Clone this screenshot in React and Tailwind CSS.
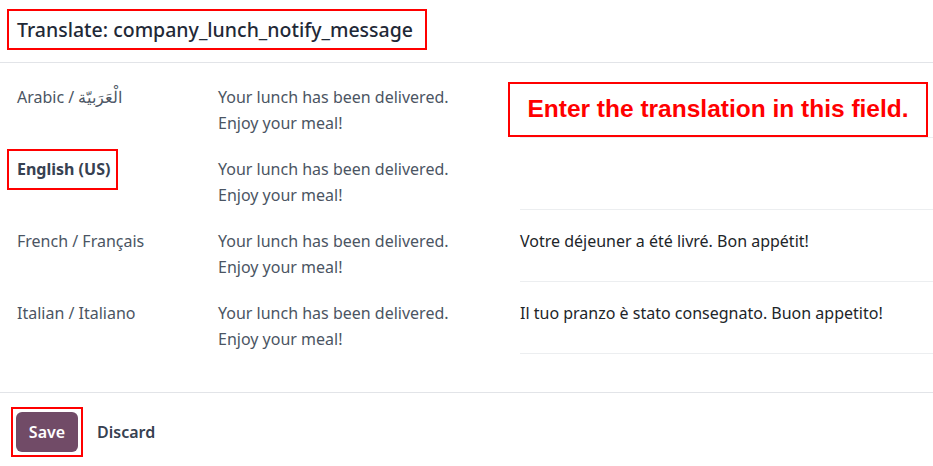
import React from "react";

const rows = [
    { lang: "Arabic / الْعَرَبيّة", value: "", hint: true },
    { lang: "English (US)", value: "", bold: true },
    { lang: "French / Français", value: "Votre déjeuner a été livré. Bon appétit!" },
    { lang: "Italian / Italiano", value: "Il tuo pranzo è stato consegnato. Buon appetito!" },
];

const TranslateDialog = () => {
    return <div className="w-[933px] h-[466px] bg-white overflow-hidden font-['Noto_Sans','Open_Sans',sans-serif]">
        {/* header */}
        <div className="h-[63px] border-b border-[#e2e4e8] pl-[7px] pt-[9px]">
            <div className="inline-flex items-center h-[41px] border-2 border-[#ff0000] pl-[8px] pr-[12px]">
                <h4 className="text-[19.5px] font-medium text-[#1f2937] leading-none">Translate: company_lunch_notify_message</h4>
            </div>
        </div>

        {/* body */}
        <div className="pt-[3px] pb-[38px]">
            {rows.map((row, i) => (
                <div key={i} className="flex h-[72px]">
                    <div className="w-[218px] shrink-0 pl-[17px] pt-[18px] text-[16px] leading-[26px]">
                        {row.bold ?
                            <span className="relative font-bold text-[#374151]">
                                {row.lang}
                                <span className="absolute top-[-9px] bottom-[-10px] left-[-10px] right-[-8px] border-2 border-[#ff0000]"></span>
                            </span>
                            : <span className="text-[#4b5563]">{row.lang}</span>
                        }
                    </div>
                    <div className="w-[302px] shrink-0 pt-[18px] text-[16px] leading-[26px] text-[#4b5563]">
                        <div>Your lunch has been delivered.</div>
                        <div>Enjoy your meal!</div>
                    </div>
                    <div className="relative flex-1 border-b border-[#eceef0] pt-[18px] text-[16px] leading-[26px] text-[#212529]">
                        {row.value}
                        {row.hint &&
                            <div className="absolute left-[-12px] top-[16px] w-[420px] h-[55px] border-2 border-[#ff0000] bg-white flex items-center justify-center">
                                <span className="font-['Liberation_Sans',Arial,sans-serif] font-bold text-[24.5px] text-[#ff0000] leading-none">Enter the translation in this field.</span>
                            </div>
                        }
                    </div>
                </div>
            ))}
        </div>

        {/* footer */}
        <div className="border-t border-[#e2e4e8] flex items-center pl-[16px] pt-[19px] gap-[19px]">
            <div className="relative">
                <button className="w-[62px] h-[40px] rounded-[6px] bg-[#714b67] text-white text-[16px] font-semibold">Save</button>
                <span className="absolute top-[-5px] bottom-[-5px] left-[-5px] right-[-5px] border-2 border-[#ff0000]"></span>
            </div>
            <button className="text-[16px] font-semibold text-[#374151]">Discard</button>
        </div>
    </div>
}

export default function App() {
    return <TranslateDialog />
}
